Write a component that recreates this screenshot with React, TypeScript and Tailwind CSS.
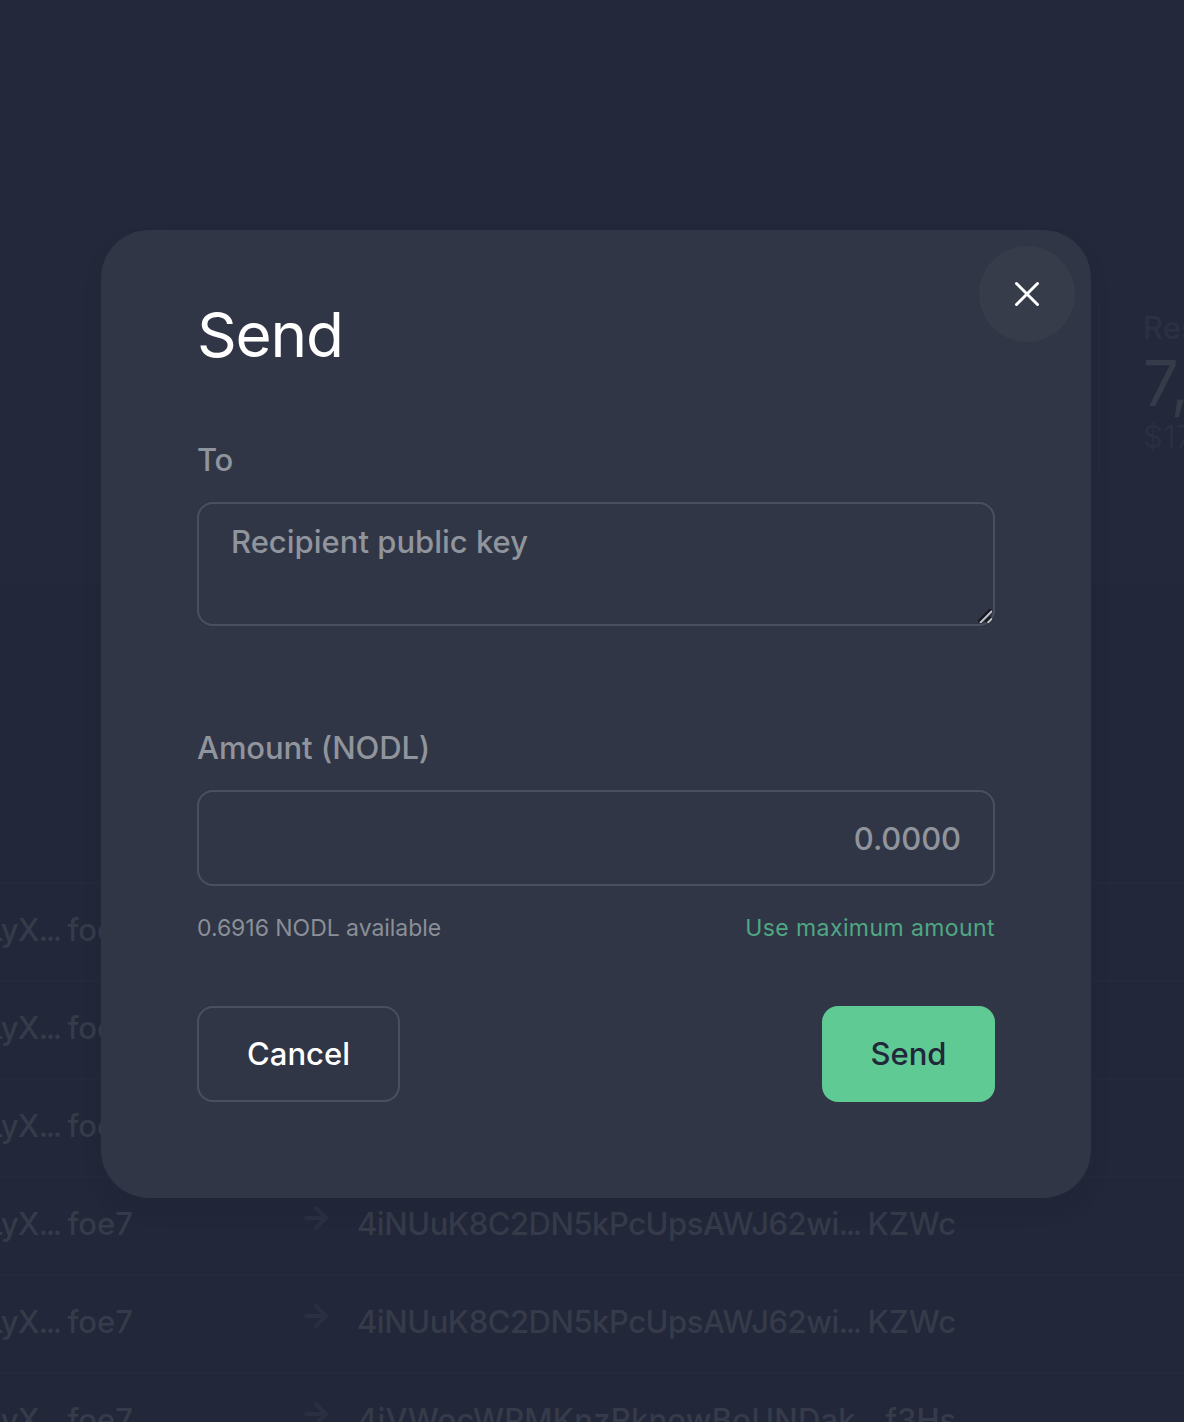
import { ArrowRight } from "lucide-react";

const rows = [
  { id: 1, from: ["4jkLyX", "foe7"], to: ["4iNUuK8C2DN5kPcUpsAWJ62wi", "KZWc"], wide: false },
  { id: 2, from: ["4jkLyX", "foe7"], to: ["4iNUuK8C2DN5kPcUpsAWJ62wi", "KZWc"], wide: false },
  { id: 3, from: ["4jkLyX", "foe7"], to: ["4iNUuK8C2DN5kPcUpsAWJ62wi", "KZWc"], wide: false },
  { id: 4, from: ["4jkLyX", "foe7"], to: ["4iNUuK8C2DN5kPcUpsAWJ62wi", "KZWc"], wide: false },
  { id: 5, from: ["4jkLyX", "foe7"], to: ["4iNUuK8C2DN5kPcUpsAWJ62wi", "KZWc"], wide: false },
  { id: 6, from: ["4jkLyX", "foe7"], to: ["4iVWocWPMKnzRknowBoUNDak", "f3Hs"], wide: true },
];

function Address({ parts }: { parts: string[] }) {
  return (
    <>
      {parts[0]}
      <span className="tracking-[-2.4px]">...</span> <span className="tracking-normal">{parts[1]}</span>
    </>
  );
}

function Page() {
  return (
    <div className="flex h-full flex-col">
      <div className="flex h-[585px] shrink-0 justify-end bg-[#23283a] pt-[304px]">
        <div className="h-[168px] w-[86px] shrink-0 border-l-2 border-[#262b3d] pl-[43px] whitespace-nowrap">
          <div className="mt-1.5 h-9 text-[31px] leading-9 font-medium text-[#2c3142]">Reserved</div>
          <div className="h-[73px] text-[63px] leading-[75px] text-[#363b4a]">7,000</div>
          <div className="h-9 text-[31px] leading-9 text-[#2a2f41]">$17.00</div>
        </div>
      </div>
      <div className="shrink-0 bg-[#222739] pt-[297px]">
        {rows.map((r) => (
          <div
            key={r.id}
            className="flex h-[98px] border-t-2 border-[#25293b] text-[31px] font-medium whitespace-nowrap text-[#363b4a]"
          >
            <div className="flex w-[133px] justify-end pt-[26px] leading-10 tracking-[-0.7px]">
              <div className="shrink-0">
                <Address parts={r.from} />
              </div>
            </div>
            <ArrowRight size={34} strokeWidth={2.8} className="mt-[23px] ml-[166px] shrink-0 text-[#2b3041]" />
            <div
              className={
                r.wide
                  ? "ml-6 pt-[26px] leading-10 tracking-[0.2px]"
                  : "ml-6 pt-[26px] leading-10 tracking-[-0.48px]"
              }
            >
              <Address parts={r.to} />
            </div>
          </div>
        ))}
      </div>
    </div>
  );
}

export default function App() {
  return (
    <div className="relative h-[1422px] w-[1184px] overflow-hidden bg-[#222739] font-['Inter',sans-serif]">
      <Page />
      <div className="absolute inset-0 flex justify-center pt-[230px] pl-2">
        <div className="relative flex h-[968px] w-[990px] flex-col rounded-[48px] bg-[#303645] px-24 shadow-[0_12px_24px_-6px_rgba(24,26,44,0.18)]">
          <button className="absolute top-4 right-4 flex size-24 items-center justify-center rounded-full bg-[#373c4b]" aria-label="Close">
            <svg width="26" height="26" viewBox="0 0 26 26" fill="none" stroke="#fff" strokeWidth="3" strokeLinecap="round">
              <path d="M2.500 2.500l21 21M23.500 2.500L2.500 23.500" />
            </svg>
          </button>
          <h1 className="mt-[65px] h-20 text-[62px] leading-20 tracking-[-1.2px] text-white">Send</h1>
          <label className="mt-[65px] h-10 text-[31px] leading-10 font-medium tracking-[-0.4px] text-[#90949c]">To</label>
          <div className="relative mt-[22px] h-[124px]">
            <textarea
              placeholder="Recipient public key"
              className="block h-full w-full resize-none overflow-hidden rounded-2xl border-2 border-[#4b505e] bg-transparent px-8 pt-[18px] text-[31px] leading-10 font-medium text-white placeholder:text-[#90949c]"
            />
            <svg className="absolute right-[3px] bottom-[3px]" width="14" height="14" viewBox="0 0 14 14" fill="none">
              <path d="M0 13L13 0M7.500 13L13 8" stroke="#14171f" strokeWidth="2.400" />
              <path d="M2 14L14 2M9.500 14L14 9.500" stroke="#c4c5c8" strokeWidth="1.800" />
            </svg>
          </div>
          <label className="mt-[102px] h-10 text-[31px] leading-10 font-medium tracking-[-0.1px] text-[#90949c]">Amount (NODL)</label>
          <input
            placeholder="0.0000"
            className="mt-[22px] h-24 w-full rounded-2xl border-2 border-[#4b505e] bg-transparent px-8 text-right text-[31px] font-medium tracking-[-0.1px] text-white placeholder:text-[#90949c]"
          />
          <div className="mt-6 flex h-9 justify-between text-[23px] leading-9">
            <span className="tracking-[-0.04px] text-[#8a8f98]">0.6916 NODL available</span>
            <button className="tracking-[0.42px] text-[#4fa883]">Use maximum amount</button>
          </div>
          <div className="mt-[60px] flex justify-between text-[31px] font-medium">
            <button className="h-24 w-[203px] rounded-2xl border-2 border-[#4b505e] text-white">Cancel</button>
            <button className="h-24 w-[173px] rounded-2xl bg-[#5fca93] text-[#22273a]">Send</button>
          </div>
        </div>
      </div>
    </div>
  );
}
